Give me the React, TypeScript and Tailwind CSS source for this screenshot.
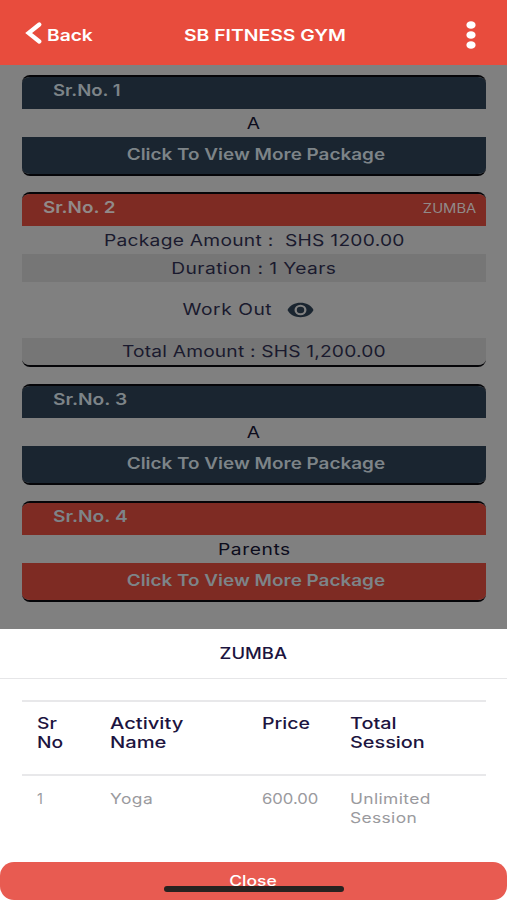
import clsx from 'clsx';

interface PackageItem {
  id: number;
  name: string;
  color: string;
}

function CollapsedCard({ id, name, color }: PackageItem) {
  return (
    <div className="flex h-[101px] flex-col overflow-hidden rounded-lg border-y-2 border-[#050508]">
      <div className={clsx('h-8 pl-[31px] text-[16px] leading-[27px] font-semibold text-[#7d8488]', color)}>
        <span className={clsx('inline-block origin-left', id === 1 ? 'scale-x-[1.16]' : 'scale-x-[1.2]')}>
          Sr.No. {id}
        </span>
      </div>
      <div className="h-7 text-center text-[16px] leading-7 text-[#0c0c1c]">
        <span className="inline-block scale-x-[1.2] tracking-[0.5px]">{name}</span>
      </div>
      <button
        className={clsx('flex-1 pl-[3px] text-center text-[15.5px] leading-[34px] font-semibold text-[#7d8488]', color)}
      >
        <span className="inline-block -translate-y-px scale-x-[1.22]">Click To View More Package</span>
      </button>
    </div>
  );
}

function ExpandedCard() {
  return (
    <div className="mb-px flex h-[175px] flex-col overflow-hidden rounded-lg border-y-2 border-[#050508] text-center text-[16px] text-[#1a1a2e]">
      <div className="flex h-8 justify-between bg-[#7e2b23] pr-[10px] pl-[21px] text-[#918a89]">
        <span className="origin-left scale-x-[1.18] leading-[27px] font-semibold">Sr.No. 2</span>
        <span className="origin-right scale-x-[1.18] text-[12.5px] leading-[29px]">ZUMBA</span>
      </div>
      <div className="h-7 leading-7 whitespace-pre">
        <span className="inline-block scale-x-[1.2] tracking-[0.23px]">Package Amount :  SHS 1200.00</span>
      </div>
      <div className="h-7 bg-[#767676] leading-7">
        <span className="inline-block scale-x-[1.2] tracking-[0.35px]">Duration : 1 Years</span>
      </div>
      <div className="flex h-14 items-center justify-center gap-[22px] pr-[4px] pb-0.5">
        <span className="scale-x-[1.2] tracking-[0.45px]">Work Out</span>
        <svg className="mt-0.5" width="27" height="16" viewBox="0 0 27 16">
          <path d="M0.5 8C3 3 8 0.8 13.5 0.8S24 3 26.5 8C24 13 19 15.2 13.5 15.2S3 13 0.5 8Z" fill="#1a2530" />
          <ellipse cx="13.5" cy="8" rx="6" ry="5.3" fill="#808080" />
          <ellipse cx="13.5" cy="8" rx="3.7" ry="3.3" fill="#1a2530" />
        </svg>
      </div>
      <div className="flex-1 bg-[#767676] leading-[26px]">
        <span className="inline-block scale-x-[1.2] tracking-[0.15px]">Total Amount : SHS 1,200.00</span>
      </div>
    </div>
  );
}

function ActivitySheet() {
  return (
    <div className="flex h-[271px] flex-col bg-white">
      <div className="h-[50px] border-b border-[#e6e6e8] text-center text-[16px] leading-[49px] font-medium text-[#1c1440]">
        <span className="inline-block scale-x-[1.15]">ZUMBA</span>
      </div>
      <div className="mt-[21px] mr-[21px] ml-[22px] flex-1">
        <div className="grid h-[76px] grid-cols-[73px_151.5px_88px_1fr] border-y-2 border-[#e8e8ea] pt-3 pl-[15px] text-[16px] leading-[19px] font-medium text-[#1c1440]">
          <span className="origin-left scale-x-[1.2]">Sr<br />No</span>
          <span className="origin-left scale-x-[1.26]">Activity<br />Name</span>
          <span className="origin-left scale-x-[1.22]">Price</span>
          <span className="origin-left scale-x-[1.24]">Total<br />Session</span>
        </div>
        <div className="grid grid-cols-[73px_151.5px_88px_1fr] pt-[13px] pl-[15px] text-[14.5px] leading-[19px] text-[#9a9a9e]">
          <span>1</span>
          <span className="origin-left scale-x-[1.2] tracking-[0.4px]">Yoga</span>
          <span className="origin-left scale-x-[1.15]">600.00</span>
          <span className="origin-left scale-x-[1.2] tracking-[0.3px]">Unlimited<br />Session</span>
        </div>
      </div>
      <button className="relative h-[38px] rounded-[14px] bg-[#e85b51] text-center text-[14px] leading-[38px] font-medium text-white">
        <span className="inline-block scale-x-[1.25]">Close</span>
        <span className="absolute top-6 left-[164px] h-[6px] w-[180px] rounded-full bg-[#272220]" />
      </button>
    </div>
  );
}

export default function App() {
  return (
    <div className="flex h-[900px] w-[507px] flex-col overflow-hidden bg-[#808080] font-['Inter','Liberation_Sans',sans-serif]">
      <header className="flex h-[65px] shrink-0 items-center bg-[#e84c3d] pt-1 pr-[31px] pl-[25px] text-[16px] font-semibold text-white">
        <svg className="-mt-[3px]" width="17" height="22" viewBox="0 0 17 22" fill="none" stroke="white" strokeWidth="4.2">
          <path d="M14.3 2.5L3.6 11L14.3 19.5" strokeLinecap="round" />
        </svg>
        <span className="ml-[5px] origin-left scale-x-[1.2]">Back</span>
        <span className="ml-[99px] origin-left scale-x-[1.21]">SB FITNESS GYM</span>
        <svg className="ml-auto" width="10" height="28" viewBox="0 0 10 28" fill="white">
          <ellipse cx="5" cy="4" rx="4.6" ry="3.8" />
          <ellipse cx="5" cy="14" rx="4.6" ry="3.8" />
          <ellipse cx="5" cy="24" rx="4.6" ry="3.8" />
        </svg>
      </header>
      <main className="flex flex-1 flex-col gap-4 pt-[10px] pr-[21px] pl-[22px]">
        <CollapsedCard id={1} name="A" color="bg-[#1a2530]" />
        <ExpandedCard />
        <CollapsedCard id={3} name="A" color="bg-[#1a2530]" />
        <CollapsedCard id={4} name="Parents" color="bg-[#7e2b23]" />
      </main>
      <ActivitySheet />
    </div>
  );
}
